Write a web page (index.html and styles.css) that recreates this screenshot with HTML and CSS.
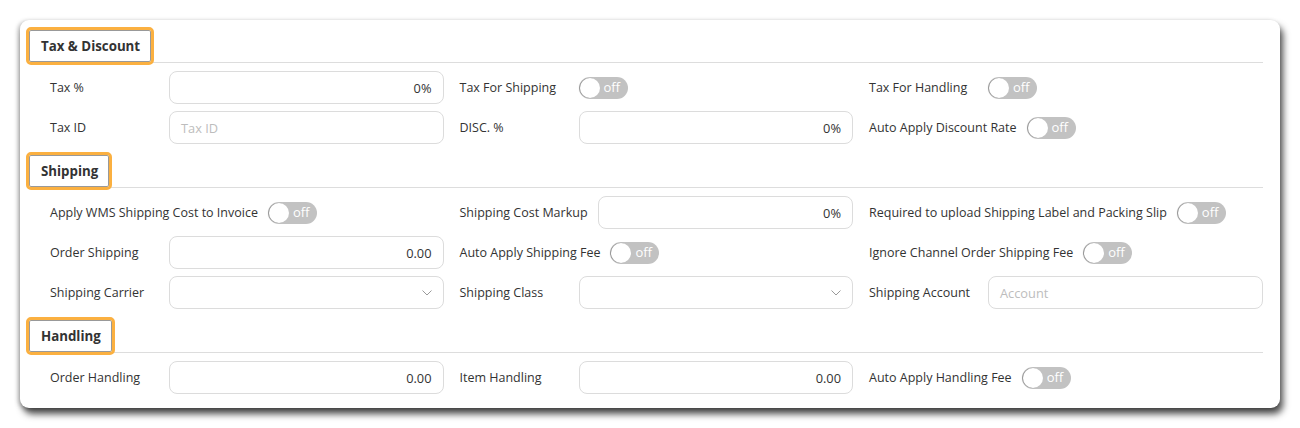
FILE: index.html
```html
<!DOCTYPE html>
<html lang="en">
<head>
	<meta charset="UTF-8">
	<title>Invoice Settings</title>
	<link rel="stylesheet" href="styles.css">
</head>
<body>
	<div class="card">
		<!-- Tax & Discount -->
		<div class="sec-head"><span class="tab">Tax &amp; Discount</span></div>
		<div class="grid">
			<div class="field"><label>Tax %</label><div class="input num">0%</div></div>
			<div class="field"><label>Tax For Shipping</label><span class="switch">off</span></div>
			<div class="field"><label>Tax For Handling</label><span class="switch">off</span></div>

			<div class="field"><label>Tax ID</label><div class="input ph">Tax ID</div></div>
			<div class="field"><label>DISC. %</label><div class="input num">0%</div></div>
			<div class="field"><label>Auto Apply Discount Rate</label><span class="switch">off</span></div>
		</div>

		<!-- Shipping -->
		<div class="sec-head"><span class="tab">Shipping</span></div>
		<div class="grid">
			<div class="field"><label>Apply WMS Shipping Cost to Invoice</label><span class="switch">off</span></div>
			<div class="field"><label>Shipping Cost Markup</label><div class="input num">0%</div></div>
			<div class="field"><label>Required to upload Shipping Label and Packing Slip</label><span class="switch">off</span></div>

			<div class="field"><label>Order Shipping</label><div class="input num">0.00</div></div>
			<div class="field"><label>Auto Apply Shipping Fee</label><span class="switch">off</span></div>
			<div class="field"><label>Ignore Channel Order Shipping Fee</label><span class="switch">off</span></div>

			<div class="field"><label>Shipping Carrier</label>
				<div class="input select"><svg width="10" height="6" viewBox="0 0 10 6"><path d="M0.5 0.5 L5 5 L9.5 0.5" fill="none" stroke="#9a9a9a" stroke-width="1"/></svg></div>
			</div>
			<div class="field"><label>Shipping Class</label>
				<div class="input select"><svg width="10" height="6" viewBox="0 0 10 6"><path d="M0.5 0.5 L5 5 L9.5 0.5" fill="none" stroke="#9a9a9a" stroke-width="1"/></svg></div>
			</div>
			<div class="field"><label>Shipping Account</label><div class="input ph">Account</div></div>
		</div>

		<!-- Handling -->
		<div class="sec-head"><span class="tab">Handling</span></div>
		<div class="grid">
			<div class="field"><label>Order Handling</label><div class="input num">0.00</div></div>
			<div class="field"><label>Item Handling</label><div class="input num">0.00</div></div>
			<div class="field"><label>Auto Apply Handling Fee</label><span class="switch">off</span></div>
		</div>
	</div>
</body>
</html>
```
FILE: styles.css
```css
body{margin:0;padding:20px;background:#fff;font-family:"Open Sans","Noto Sans",sans-serif;font-size:12.5px;color:#333;}
.card{width:1260px;box-sizing:border-box;padding:7px 17px 14px 7px;background:#fff;border-radius:9px;box-shadow:3px 6px 7px rgba(0,0,0,.7),-2px 1px 4px rgba(0,0,0,.25);}

.sec-head{height:35px;border-bottom:1px solid #ddd;}
.sec-head + .grid{margin-bottom:8px;}
.tab{display:inline-flex;align-items:center;box-sizing:border-box;height:38px;margin-left:-1px;padding:0 11px 0 12px;background:#fff;border:3px solid #fbb040;border-radius:5px;box-shadow:inset 0 0 0 1px #999;font-weight:700;font-size:13.3px;color:#333;}

.grid{display:grid;grid-template-columns:repeat(3,409.5px);grid-auto-rows:33px;row-gap:7px;padding-top:8px;margin-left:13px;}
.grid:last-child{margin-bottom:0;}
.field{display:flex;align-items:center;padding:0 6px 0 10px;}
.field label{min-width:119px;box-sizing:border-box;padding-right:10px;white-space:nowrap;}

.input{flex:1;height:33px;box-sizing:border-box;border:1px solid #dcdcdc;border-radius:8px;display:flex;align-items:center;padding:0 11px;font-size:12.8px;}
.input.num{justify-content:flex-end;}
.input.ph{color:#bdbdbd;}
.input.select{justify-content:flex-end;padding-right:11px;}

.switch{position:relative;display:inline-block;width:49px;height:22px;box-sizing:border-box;padding-left:25px;border-radius:11px;background:#c2c2c2;color:#fff;font-size:13px;line-height:21px;}
.switch::before{content:"";position:absolute;left:1px;top:1px;width:20px;height:20px;border-radius:50%;background:#fff;box-shadow:-1px 0 1px rgba(0,0,0,.25);}
```
